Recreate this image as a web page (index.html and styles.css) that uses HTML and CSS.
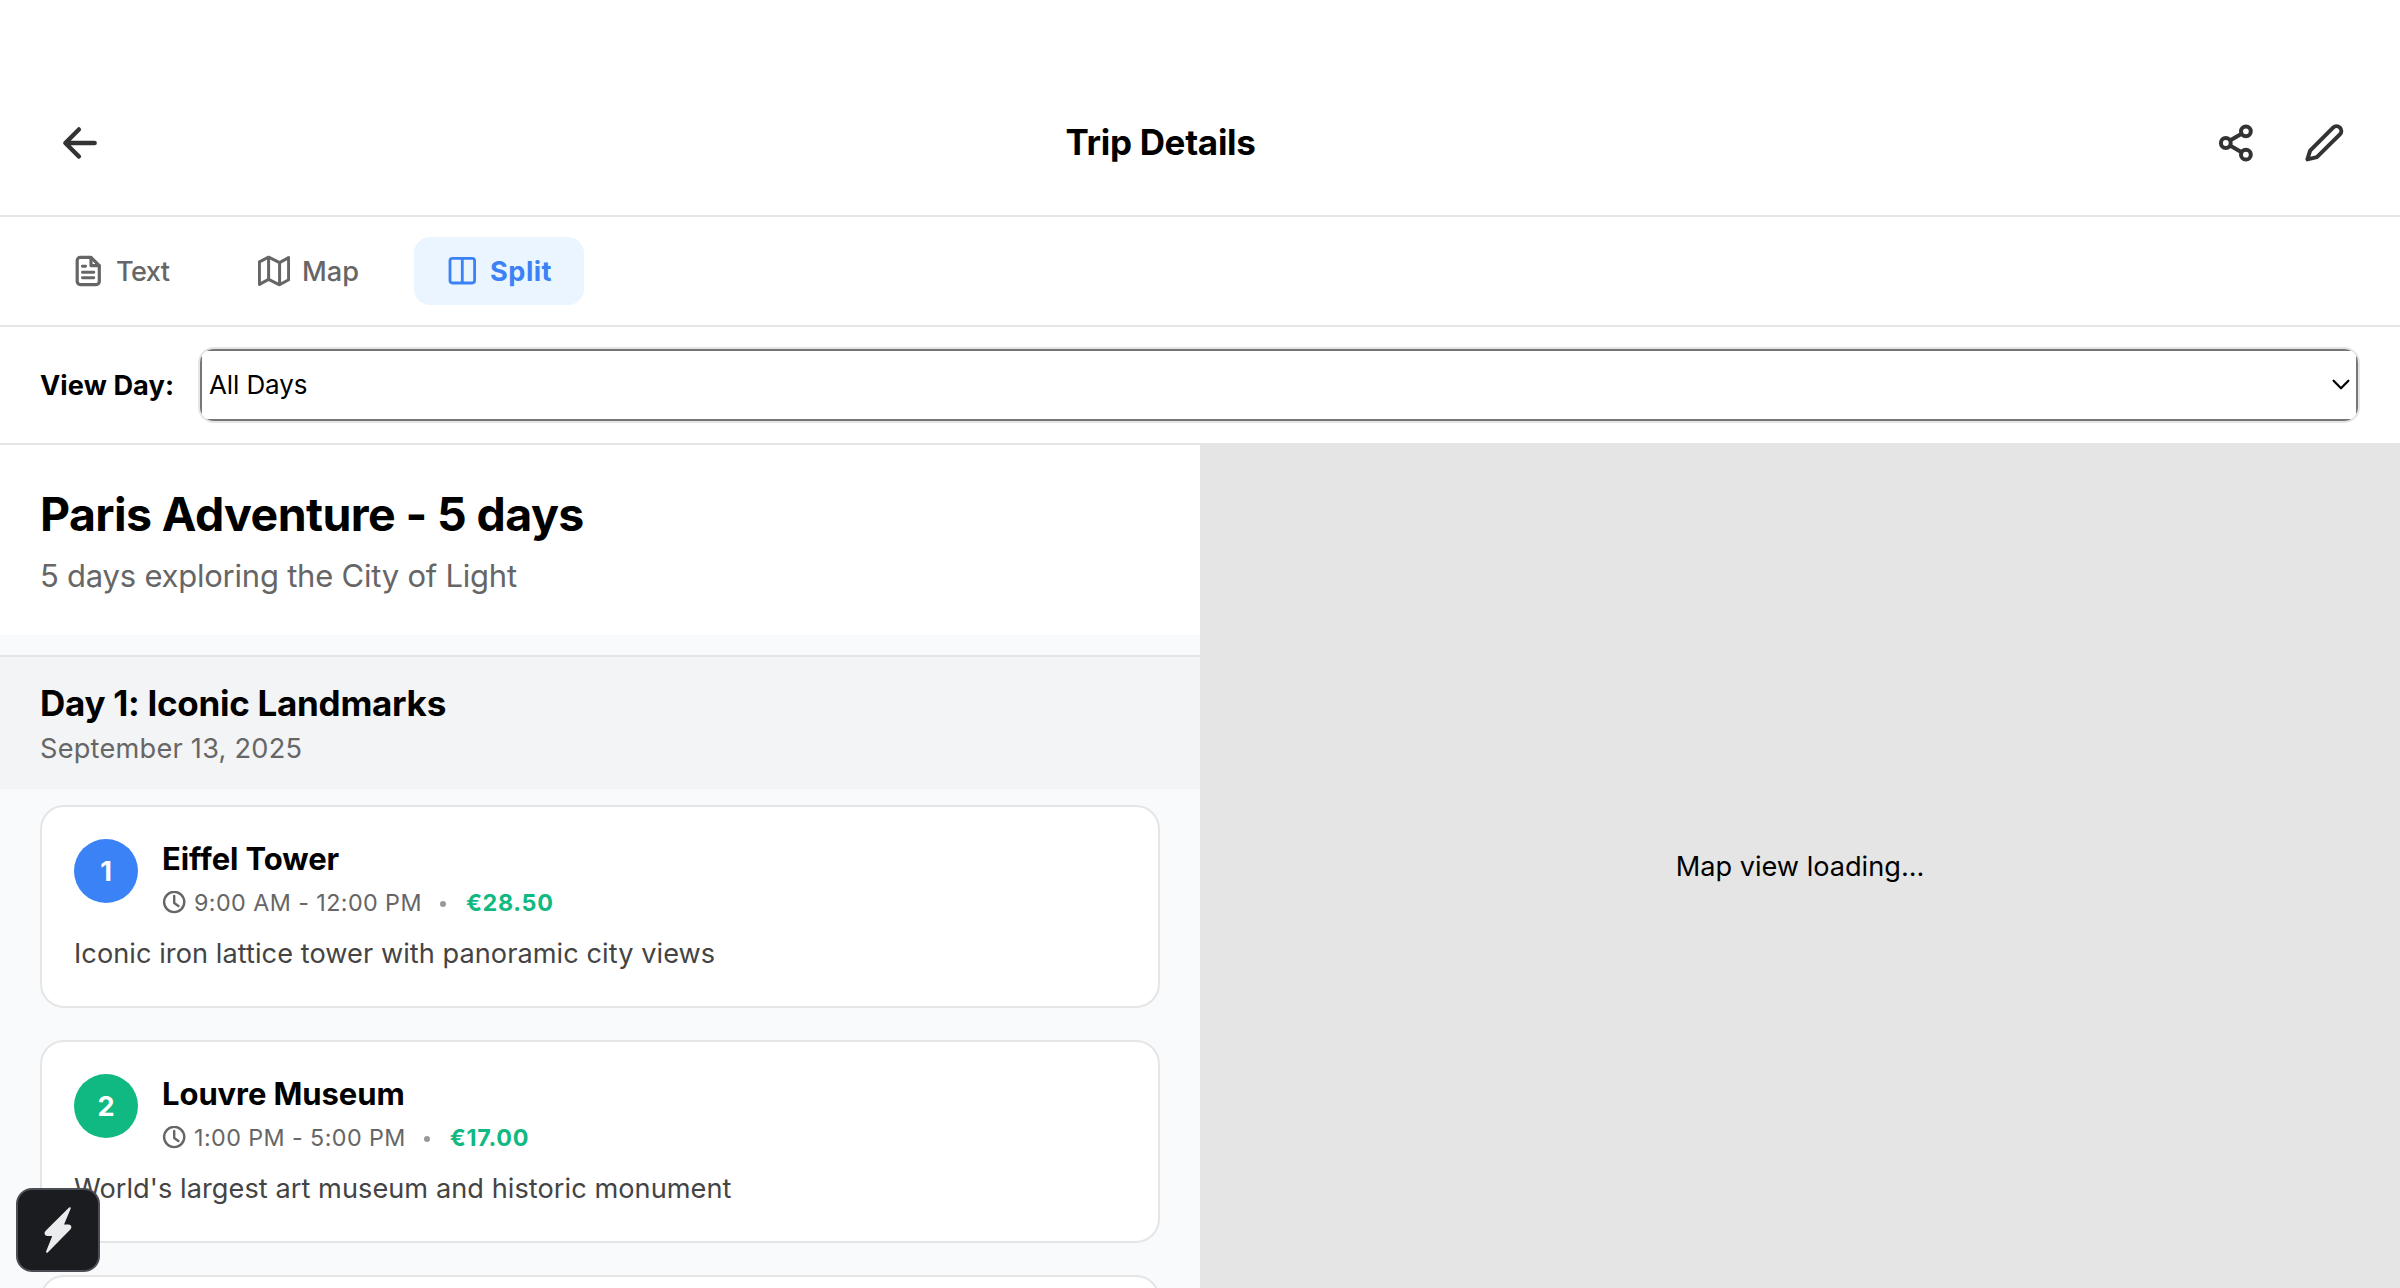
FILE: index.html
```html
<!DOCTYPE html>
<html lang="en">
<head>
<meta charset="utf-8">
<title>Trip Details</title>
<link rel="stylesheet" href="styles.css">
</head>
<body>
<div class="app">
  <header class="header">
    <button class="icon-btn" aria-label="Back">
      <svg width="48" height="48" viewBox="0 0 512 512" fill="none" stroke="currentColor" stroke-width="48" stroke-linecap="round" stroke-linejoin="round"><path d="M244 400 100 256l144-144M120 256h292"/></svg>
    </button>
    <h1 class="header-title">Trip Details</h1>
    <div class="header-actions">
      <button class="icon-btn" aria-label="Share">
        <svg width="44" height="44" viewBox="0 0 44 44" fill="none" stroke="currentColor" stroke-width="4"><circle cx="11.8" cy="22" r="4.9"/><circle cx="31.9" cy="10.3" r="4.9"/><circle cx="31.9" cy="33.7" r="4.9"/><path d="M16 19.5 27.6 12.8M16 24.5l11.6 6.7"/></svg>
      </button>
      <button class="icon-btn" aria-label="Edit">
        <svg width="44" height="44" viewBox="0 0 44 44" fill="none" stroke="currentColor" stroke-width="4" stroke-linejoin="round"><path d="M5.4 38.4 8.1 29.6 31.1 6.6a4.8 4.8 0 0 1 6.8 6.8L14.9 36.1Z"/></svg>
      </button>
    </div>
  </header>

  <nav class="tabs">
    <button class="tab tab-text">
      <svg width="32" height="36" viewBox="0 0 32 36" fill="none" stroke="currentColor" stroke-width="3.2" stroke-linecap="round" stroke-linejoin="round"><path d="M19 4.4H8.2a3 3 0 0 0-3 3v21.2a3 3 0 0 0 3 3h16.1a3 3 0 0 0 3-3V12.6Z"/><path d="M19 4.6v8h8.1"/><path d="M10.4 13.2h3.2M10.4 19.3h11.4M10.4 24.7h11.4" stroke-width="2.9"/></svg>
      <span class="tab-label label-text">Text</span>
    </button>
    <button class="tab tab-map">
      <svg width="32" height="36" viewBox="0 0 32 36" fill="none" stroke="currentColor" stroke-width="3" stroke-linejoin="round"><path d="M1.4 8.8 10.6 4.2l11 5.4 9-5v22.2l-9 5-11-5.4-9.2 5ZM10.6 4.2v22.2M21.6 9.6v22.2"/></svg>
      <span class="tab-label">Map</span>
    </button>
    <button class="tab tab-split active">
      <svg width="32" height="36" viewBox="0 0 32 36" fill="none" stroke="currentColor" stroke-width="2.8"><rect x="4" y="5.4" width="24.6" height="24.6" rx="2.4"/><path d="M16.3 5.4V30"/></svg>
      <span class="tab-label">Split</span>
    </button>
  </nav>

  <div class="day-bar">
    <span class="day-label">View Day:</span>
    <div class="picker">
      <div class="select" role="combobox">
        <span class="select-value">All Days</span>
        <svg width="18" height="12" viewBox="0 0 18 12" fill="none" stroke="#000" stroke-width="2.2" stroke-linecap="round" stroke-linejoin="round"><path d="m1.6 1.7 7.4 7.6 7.4-7.6"/></svg>
      </div>
    </div>
  </div>

  <main class="split">
    <section class="plan">
      <div class="trip-head">
        <h2 class="trip-title">Paris Adventure - 5 days</h2>
        <p class="trip-sub">5 days exploring the City of Light</p>
      </div>
      <div class="day-head">
        <h3 class="day-title">Day 1: Iconic Landmarks</h3>
        <p class="day-date">September 13, 2025</p>
      </div>
      <div class="cards">
        <article class="card">
          <div class="card-head">
            <span class="badge blue">1</span>
            <div class="info">
              <h4 class="place">Eiffel Tower</h4>
              <div class="meta">
                <svg width="24" height="24" viewBox="0 0 24 24" fill="none" stroke="currentColor" stroke-width="2.4" stroke-linecap="round" stroke-linejoin="round"><circle cx="12.2" cy="11" r="10.1"/><path d="M12.2 5v7l4.2 3"/></svg>
                <span>9:00 AM - 12:00 PM</span><i class="dot"></i><span class="price">€28.50</span>
              </div>
            </div>
          </div>
          <p class="desc">Iconic iron lattice tower with panoramic city views</p>
        </article>
        <article class="card">
          <div class="card-head">
            <span class="badge green">2</span>
            <div class="info">
              <h4 class="place">Louvre Museum</h4>
              <div class="meta">
                <svg width="24" height="24" viewBox="0 0 24 24" fill="none" stroke="currentColor" stroke-width="2.4" stroke-linecap="round" stroke-linejoin="round"><circle cx="12.2" cy="11" r="10.1"/><path d="M12.2 5v7l4.2 3"/></svg>
                <span>1:00 PM - 5:00 PM</span><i class="dot"></i><span class="price">€17.00</span>
              </div>
            </div>
          </div>
          <p class="desc">World's largest art museum and historic monument</p>
        </article>
        <article class="card card-next"></article>
      </div>
    </section>
    <section class="map">Map view loading...</section>
  </main>
</div>

<button class="dev-menu" aria-label="Quick actions">
  <svg width="30" height="50" viewBox="0 0 30 50" fill="#ebecee" stroke="#ebecee" stroke-width="2" stroke-linejoin="round"><path d="M26.8 3.2 3.4 26.4c-1.6 1.8-.8 3.6 1 3.6h6.4L4 46.8 26.6 23.8c1.4-1.6.8-3.4-1-3.4h-6Z"/></svg>
</button>
</body>
</html>
```
FILE: styles.css
```css
* { box-sizing: border-box; margin: 0; padding: 0; }
body { font-family: Inter, "Liberation Sans", sans-serif; background: #fff; color: #000; overflow: hidden; }
button { font: inherit; background: none; border: 0; }
svg { display: block; flex: none; }

.app { display: flex; flex-direction: column; height: 100vh; }

.header {
  display: flex; align-items: center; justify-content: space-between;
  height: 217px; padding: 70px 38px 0 40px; border-bottom: 2px solid #e5e5e5;
}
.icon-btn { padding: 16px; color: #333; }
.header-title { font-size: 35px; font-weight: 650; line-height: 44px; letter-spacing: -.3px; padding: 0 0 1px 3px; }
.header-actions { display: flex; gap: 12px; }

.tabs {
  display: flex; align-items: center; gap: 20px;
  height: 110px; padding: 0 40px; border-bottom: 2px solid #e5e5e5;
}
.tab {
  display: flex; align-items: center; gap: 12px;
  height: 68px; padding: 0 32px; border-radius: 16px;
  font-size: 27.15px; font-weight: 450; line-height: 34px; color: #666; white-space: nowrap;
}
.tab-text { width: 166px; }
.tab-map { width: 168px; }
.tab-split { width: 170px; }
.label-text { letter-spacing: -.6px; }
.tab-label { padding-top: 1px; }
.active { background: #ebf5ff; color: #3b82f6; font-weight: 650; letter-spacing: .5px; }

.day-bar {
  display: flex; align-items: center; gap: 24px;
  height: 118px; padding: 0 40px; border-bottom: 2px solid #e5e5e5;
}
.day-label { width: 134px; font-size: 27.15px; font-weight: 650; letter-spacing: .1px; white-space: nowrap; padding-top: 1px; }
.picker { flex: 1; height: 76px; border: 2px solid #e5e5e5; border-radius: 16px; overflow: hidden; }
.select {
  display: flex; align-items: center; justify-content: space-between;
  height: 72px; padding: 0 6px 0 7px; border: 2px solid #767676;
  font-size: 26px; letter-spacing: -.1px;
}
.select-value { padding-bottom: 2px; }

.split { flex: 1; display: flex; min-height: 0; }
.plan { width: 1200px; background: #f9fafc; overflow: hidden; }
.trip-head { padding: 40px; background: #fff; margin-bottom: 20px; }
.trip-title { font-size: 46.5px; font-weight: 700; line-height: 58px; letter-spacing: -.6px; margin-bottom: 14px; }
.trip-sub { font-size: 31px; line-height: 38px; letter-spacing: -.23px; color: #666; }

.day-head { padding: 24px 40px 23px; background: #f3f4f6; border-top: 2px solid #e5e5e5; }
.day-title { font-size: 35px; font-weight: 650; line-height: 44px; letter-spacing: -.28px; margin-bottom: 7px; }
.day-date { font-size: 27.15px; line-height: 34px; letter-spacing: .25px; color: #666; }

.cards { display: flex; flex-direction: column; gap: 32px; padding: 16px 40px; }
.card { padding: 32px; background: #fff; border: 2px solid #e5e5e5; border-radius: 24px; }
.card-next { height: 203px; }
.card-head { display: flex; gap: 24px; height: 78px; }
.badge {
  display: flex; align-items: center; justify-content: center;
  width: 64px; height: 64px; border-radius: 50%;
  color: #fff; font-size: 27.15px; font-weight: 700; padding-top: 1px;
}
.blue { background: #3b82f6; }
.green { background: #10b981; }
.info { padding-top: 1px; }
.place { font-size: 31px; font-weight: 650; line-height: 38px; letter-spacing: -.08px; margin-bottom: 11px; }
.meta { display: flex; align-items: center; height: 28px; font-size: 23.3px; line-height: 28px; letter-spacing: .42px; color: #666; }
.meta svg { margin-right: 8px; }
.dot { width: 6px; height: 6px; border-radius: 50%; background: #999; margin: 2px 20px 0 18px; }
.price { color: #10b981; font-weight: 650; letter-spacing: .7px; }
.desc { margin-top: 17px; font-size: 27.15px; line-height: 40px; letter-spacing: .06px; color: #444; }

.map { flex: 1; display: flex; align-items: center; justify-content: center; background: #e5e5e5; font-size: 27.15px; }

.dev-menu {
  position: absolute; left: 16px; top: 1188px; width: 84px; height: 84px;
  display: flex; align-items: center; justify-content: center;
  background: #1b1c1f; border: 2px solid #4b4e55; border-radius: 16px;
}
```
